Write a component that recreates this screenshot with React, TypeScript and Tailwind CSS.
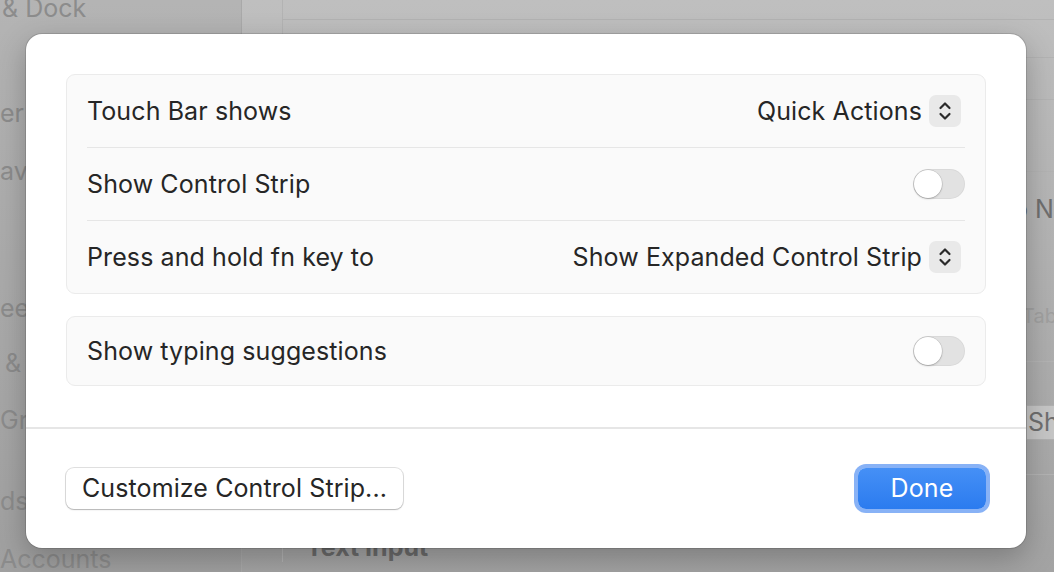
import React from "react";

function Stepper() {
  return (
    <span className="mr-1 flex h-8 w-8 items-center justify-center rounded-[7px] bg-[#e9e9e9]">
      <svg width="16" height="22" viewBox="0 0 16 22" fill="none" stroke="#2a2a2a" strokeWidth="2.2" strokeLinecap="round" strokeLinejoin="round">
        <path d="M3.5 8 L8 3.5 L12.5 8" />
        <path d="M3.5 14 L8 18.5 L12.5 14" />
      </svg>
    </span>
  );
}

function Toggle() {
  return (
    <span className="flex h-[30px] w-[52px] items-center rounded-full bg-[#e2e2e2] p-px shadow-[inset_0_0_0_1px_rgba(0,0,0,0.04)]">
      <span className="h-[28px] w-[28px] rounded-full bg-white shadow-[0_0_0_0.5px_rgba(0,0,0,0.15),0_1px_2px_rgba(0,0,0,0.2)]" />
    </span>
  );
}

function Row({ label, children }: { label: string; children: React.ReactNode }) {
  return (
    <div className="flex h-[72px] items-center justify-between px-5">
      <span className="pt-[2px]">{label}</span>
      <div className="flex items-center gap-[7px]">{children}</div>
    </div>
  );
}

function Backdrop() {
  return (
    <div className="flex h-[572px] w-[1054px] overflow-hidden bg-gradient-to-b from-[#bfbfbf] to-[#a3a3a3] text-[25px] text-[#8c8c8c]">
      <aside className="flex w-[242px] shrink-0 flex-col border-r border-[#a9a9a9] bg-gradient-to-b from-[#b4b4b4] to-[#a0a0a0]">
        <div className="-mt-[8px] ml-[2px] h-[40px] leading-[32px]">&amp; Dock</div>
        <div className="mt-[74px] h-[30px] leading-[30px]">er</div>
        <div className="mt-[28px] h-[30px] leading-[30px]">av</div>
        <div className="mt-[107px] h-[30px] leading-[30px]">ee</div>
        <div className="ml-[5px] mt-[25px] h-[30px] leading-[30px]">&amp;</div>
        <div className="mt-[27px] h-[30px] leading-[30px]">Gr</div>
        <div className="mt-[51px] h-[30px] leading-[30px]">ds</div>
        <div className="mt-[28px] h-[30px] leading-[30px]">Accounts</div>
      </aside>
      <main className="flex flex-1 flex-col pl-[40px]">
        <div className="flex flex-col border-l border-[#b3b3b3]">
          <div className="h-[20px] border-b border-[#b3b3b3]" />
          <div className="h-[38px] border-b border-[#b3b3b3]" />
          <div className="h-[42px] border-b border-[#b3b3b3]" />
          <div className="h-[72px] border-b border-[#b3b3b3]" />
          <div className="flex h-[76px] items-center justify-end border-b border-[#b3b3b3]">
            <span className="w-[41px] whitespace-nowrap text-[#6f6f6f]">o N</span>
          </div>
          <div className="flex h-[114px] justify-end border-b border-[#b3b3b3] pt-[56px]">
            <span className="w-[32px] whitespace-nowrap text-[20px] leading-[24px] text-[#a0a0a0]">Tab</span>
          </div>
          <div className="h-[43px]" />
          <div className="flex h-[35px] justify-end">
            <span className="w-[28px] whitespace-nowrap border-y border-l border-[#b0b0b0] bg-[#c6c6c6] pl-px leading-[33px] text-[#6f6f6f]">Sh</span>
          </div>
          <div className="h-[35px] border-b border-[#b3b3b3]" />
          <div className="h-[57px]" />
          <div className="pl-[23px] font-bold leading-[30px] text-[#6a6a6a]">Text Input</div>
        </div>
      </main>
    </div>
  );
}

export default function App() {
  return (
    <div className="relative h-[572px] w-[1054px] overflow-hidden" style={{ fontFamily: "Inter, 'Noto Sans', sans-serif" }}>
      <Backdrop />
      <div className="absolute left-[26px] top-[34px] flex h-[514px] w-[1000px] flex-col rounded-[16px] bg-white text-[25px] tracking-[0.1px] text-[#262626] shadow-[0_0_0_1px_rgba(0,0,0,0.12),0_10px_30px_rgba(0,0,0,0.25)]">
        <div className="flex flex-col gap-[22px] px-[40px] pt-[40px]">
          <div className="flex flex-col rounded-[9px] border border-[#ebebeb] bg-[#fafafa]">
            <Row label="Touch Bar shows">
              <span className="pt-[2px]">Quick Actions</span>
              <Stepper />
            </Row>
            <div className="mx-5 h-px bg-[#e6e6e6]" />
            <Row label="Show Control Strip">
              <Toggle />
            </Row>
            <div className="mx-5 h-px bg-[#e6e6e6]" />
            <Row label="Press and hold fn key to">
              <span className="pt-[2px]">Show Expanded Control Strip</span>
              <Stepper />
            </Row>
          </div>
          <div className="flex h-[70px] items-center justify-between rounded-[9px] border border-[#ebebeb] bg-[#fafafa] px-5">
            <span className="pt-[2px]">Show typing suggestions</span>
            <Toggle />
          </div>
        </div>
        <div className="mt-[41px] h-[2px] bg-[#e6e6e6]" />
        <div className="flex flex-1 items-center justify-between px-[40px]">
          <button className="h-[41px] rounded-[8px] bg-white px-[16px] text-[25px] leading-none tracking-[0.1px] text-[#262626] shadow-[0_0_0_1px_rgba(0,0,0,0.12),0_1px_1.5px_rgba(0,0,0,0.2)]">
            Customize Control Strip...
          </button>
          <button className="h-[41px] w-[128px] rounded-[8px] bg-gradient-to-b from-[#4590f6] to-[#2b7bef] text-[25px] leading-none text-white shadow-[0_0_0_4px_#88b2f6]">
            Done
          </button>
        </div>
      </div>
    </div>
  );
}
